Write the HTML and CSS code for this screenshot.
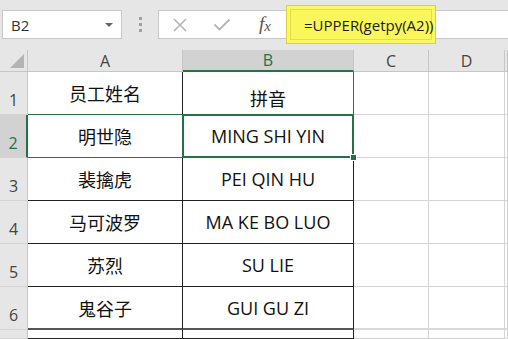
FILE: index.html
```html
<!DOCTYPE html>
<html lang="zh-CN">
<head>
    <meta charset="UTF-8">
    <meta name="viewport" content="width=device-width, initial-scale=1.0">
    <title>拼音</title>
    <link rel="stylesheet" href="styles.css">
</head>
<body>

<div class="toolbar">
    <div class="name-box">
        <span>B2</span>
        <span class="caret"></span>
    </div>
    <div class="grip"><i></i><i></i><i></i></div>
    <div class="formula-bar">
        <div class="fb-icon">
            <svg width="16" height="14" viewBox="0 0 16 14"><path d="M2 1 L14 13 M14 1 L2 13" stroke="#b4b4b4" stroke-width="1.6" fill="none"/></svg>
        </div>
        <div class="fb-icon">
            <svg width="18" height="13" viewBox="0 0 18 13"><path d="M1.5 6.5 L6.5 11.5 L16.5 1.5" stroke="#b4b4b4" stroke-width="1.8" fill="none"/></svg>
        </div>
        <div class="fb-icon fx"><i>f</i><i class="x">x</i></div>
        <div class="formula-mark">=UPPER(getpy(A2))</div>
    </div>
</div>

<div class="sheet">
    <div class="hd corner"><span class="tri"></span></div>
    <div class="hd col">A</div>
    <div class="hd col active">B</div>
    <div class="hd col">C</div>
    <div class="hd col">D</div>
    <div class="hd col"></div>

    <div class="hd row">1</div>
    <div class="cell data">员工姓名</div>
    <div class="cell data bottom green-right">拼音</div>
    <div class="cell"></div><div class="cell"></div><div class="cell"></div>

    <div class="hd row active">2</div>
    <div class="cell data green-row">明世隐</div>
    <div class="cell data selected">MING SHI YIN<span class="handle"></span></div>
    <div class="cell"></div><div class="cell"></div><div class="cell"></div>

    <div class="hd row">3</div>
    <div class="cell data">裴擒虎</div>
    <div class="cell data">PEI QIN HU</div>
    <div class="cell"></div><div class="cell"></div><div class="cell"></div>

    <div class="hd row">4</div>
    <div class="cell data">马可波罗</div>
    <div class="cell data">MA KE BO LUO</div>
    <div class="cell"></div><div class="cell"></div><div class="cell"></div>

    <div class="hd row">5</div>
    <div class="cell data">苏烈</div>
    <div class="cell data">SU LIE</div>
    <div class="cell"></div><div class="cell"></div><div class="cell"></div>

    <div class="hd row">6</div>
    <div class="cell data last">鬼谷子</div>
    <div class="cell data last">GUI GU ZI</div>
    <div class="cell last-light"></div><div class="cell last-light"></div><div class="cell last-light"></div>

    <div class="hd row"></div>
    <div class="cell data"></div>
    <div class="cell data"></div>
    <div class="cell"></div><div class="cell"></div><div class="cell"></div>
</div>

</body>
</html>
```

FILE: styles.css
```css
* {
    box-sizing: border-box;
}
body {
    margin: 0;
    padding: 0;
    width: 508px;
    height: 339px;
    overflow: hidden;
    background-color: #fff;
    font-family: "Open Sans", "Noto Sans CJK SC", sans-serif;
}

/* formula toolbar */
.toolbar {
    height: 50px;
    background-color: #e6e6e6;
    display: flex;
    align-items: center;
    padding: 0 0 1px 2px;
}
.name-box {
    width: 120px;
    height: 29px;
    background-color: #fff;
    border: 1px solid #c8c8c8;
    display: flex;
    align-items: center;
    justify-content: space-between;
    padding: 0 8px 0 8px;
    font-size: 15px;
    color: #333;
}
.caret {
    width: 0;
    height: 0;
    border-left: 4px solid transparent;
    border-right: 4px solid transparent;
    border-top: 4px solid #666;
}
.grip {
    width: 36px;
    display: flex;
    flex-direction: column;
    align-items: center;
    gap: 3px;
}
.grip i {
    width: 3px;
    height: 3px;
    background-color: #a0a0a0;
}
.formula-bar {
    flex: 1;
    height: 29px;
    background-color: #fff;
    border: 1px solid #c8c8c8;
    border-right: none;
    display: flex;
    align-items: center;
}
.fb-icon {
    width: 42px;
    display: flex;
    justify-content: center;
    align-items: center;
}
.fb-icon.fx {
    width: 44px;
    font-family: "Liberation Serif", serif;
    font-size: 19px;
    color: #555;
    padding-bottom: 2px;
}
.fb-icon.fx .x {
    font-size: 15px;
    margin-top: 5px;
}
.formula-mark {
    width: 150px;
    height: 39px;
    flex-shrink: 0;
    margin-left: -1px;
    background-color: #faf75c;
    border: 1px solid #d9d23e;
    box-shadow: inset 0 0 0 3px #fbf960, inset 0 0 0 4px #e4dd48;
    display: flex;
    align-items: center;
    padding: 0 0 0 17px;
    font-size: 15px;
    color: #1a1a1a;
}

/* grid */
.sheet {
    display: grid;
    grid-template-columns: 28px 155px 171px 75px 76px 1fr;
    grid-template-rows: 22px repeat(6, 43px) 9px;
    overflow: hidden;
}
.hd {
    background-color: #e6e6e6;
    color: #444;
    font-size: 16px;
    display: flex;
    justify-content: center;
    border-right: 1px solid #c6c6c6;
    border-bottom: 1px solid #c6c6c6;
}
.hd.col {
    align-items: center;
}
.hd.col.active {
    background-color: #d2d2d2;
    color: #217346;
    border-bottom: 2px solid #217346;
}
.hd.row {
    align-items: flex-end;
    padding-bottom: 3px;
    border-bottom-color: #d4d4d4;
}
.hd.row.active {
    background-color: #d2d2d2;
    color: #217346;
    border-right: 2px solid #217346;
}
.corner {
    position: relative;
}
.corner .tri {
    position: absolute;
    right: 3px;
    bottom: 3px;
    width: 0;
    height: 0;
    border-left: 14px solid transparent;
    border-bottom: 14px solid #b4b4b4;
}
.cell {
    border-right: 1px solid #d4d4d4;
    border-bottom: 1px solid #d4d4d4;
    display: flex;
    align-items: center;
    justify-content: center;
    font-size: 18px;
    color: #111;
    position: relative;
}
.cell.data {
    border-right-color: #222;
    border-bottom-color: #222;
}
.cell.bottom {
    align-items: flex-end;
    padding-bottom: 3px;
}
.cell.green-right {
    border-right: 1px solid #217346;
    border-bottom-color: #217346;
}
.cell.green-row {
    border-bottom-color: #217346;
}
.sheet .cell.data:nth-child(8) {
    border-bottom-color: #217346;
}
.cell.selected::after {
    content: '';
    position: absolute;
    top: -1px;
    left: -1px;
    right: -1px;
    bottom: -1px;
    border: 2px solid #217346;
    pointer-events: none;
}
.handle {
    position: absolute;
    right: -4px;
    bottom: -4px;
    width: 7px;
    height: 7px;
    background-color: #217346;
    border: 1px solid #fff;
    z-index: 2;
}
.cell.last {
    border-bottom: 2px solid #555;
}
.cell.last-light {
    border-bottom: 2px solid #d8d8d8;
}
```
